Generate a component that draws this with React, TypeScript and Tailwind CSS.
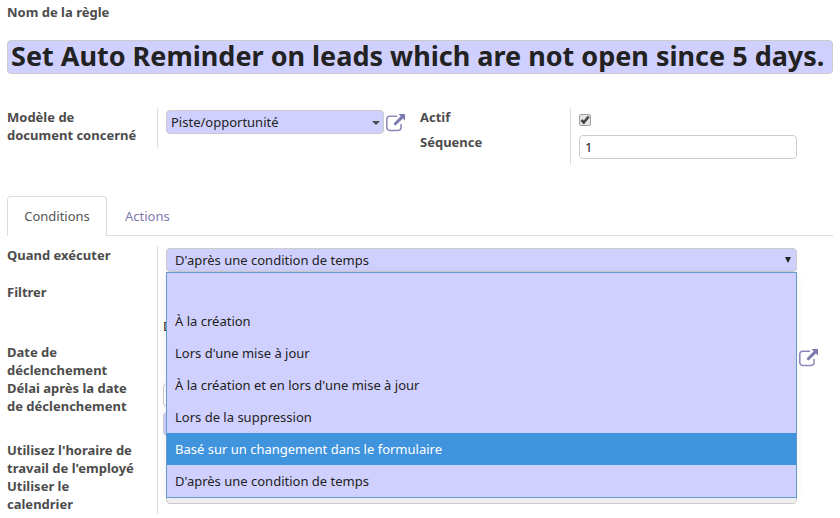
import { useState, type ReactNode } from "react";

const OPTIONS = [
  "",
  "À la création",
  "Lors d'une mise à jour",
  "À la création et en lors d'une mise à jour",
  "Lors de la suppression",
  "Basé sur un changement dans le formulaire",
  "D'après une condition de temps",
];

function ExternalLinkIcon() {
  return (
    <svg viewBox="0 0 20 18" className="h-[18px] w-5" fill="none" aria-hidden="true">
      <path
        d="M11 2.3H3.6A2.8 2.8 0 0 0 .8 5.1v8.5a2.8 2.8 0 0 0 2.8 2.8h8.6a2.8 2.8 0 0 0 2.8-2.8V10"
        stroke="#8a89b8"
        strokeWidth="1.5"
      />
      <path d="M12.4 0H19v6.6l-2.1-2.1-6.8 6.6a1 1 0 0 1-1.4 0l-.6-.6a1 1 0 0 1 0-1.4l6.6-6.8z" fill="#7c7bad" />
    </svg>
  );
}

function OpenRecord({ label }: { label: string }) {
  return (
    <button type="button" aria-label={label} className="block shrink-0">
      <ExternalLinkIcon />
    </button>
  );
}

type RowProps = { id: string; label: string; height: string; children?: ReactNode };

function Row({ id, label, height, children }: RowProps) {
  return (
    <div className={`flex ${height}`}>
      <label
        htmlFor={id}
        className="w-[151px] shrink-0 border-r border-[#ddd] pr-5 font-bold text-[#4c4c4c]"
      >
        {label}
      </label>
      <div className="min-w-0 flex-1">{children}</div>
    </div>
  );
}

export default function App() {
  const [when, setWhen] = useState("D'après une condition de temps");

  return (
    <main className="bg-white px-[7px] pt-[3px] font-['Noto_Sans','Open_Sans',sans-serif] text-[13px] leading-[18px] text-[#222]">
      <label htmlFor="name" className="block font-bold text-[#4c4c4c]">
        Nom de la règle
      </label>
      <input
        id="name"
        defaultValue="Set Auto Reminder on leads which are not open since 5 days."
        className="mt-[19px] block h-[34px] w-full rounded-[4px] border border-[#ccc] bg-[#d0d0ff] px-[3px] pb-[3px] text-[27px] leading-7 font-bold text-[#222]"
      />

      <section className="mt-[34px] grid grid-cols-2 items-start">
        <div className="flex">
          <label
            htmlFor="model"
            className="w-[151px] shrink-0 border-r border-[#ddd] pr-5 pb-1 font-bold text-[#4c4c4c]"
          >
            Modèle de document concerné
          </label>
          <div className="flex min-w-0 flex-1 items-start pt-[2px] pr-[14px] pl-2">
            <div className="relative min-w-0 flex-1">
              <select
                id="model"
                className="block h-6 w-full appearance-none rounded-[4px] border border-[#ccc] bg-[#d0d0ff] pl-1"
              >
                <option>Piste/opportunité</option>
              </select>
              <span className="pointer-events-none absolute top-[11px] right-1 border-x-4 border-t-4 border-x-transparent border-t-[#4c4c4c]" />
            </div>
            <div className="pt-1 pl-[2px]">
              <OpenRecord label="Ouvrir le modèle" />
            </div>
          </div>
        </div>

        <div>
          <div className="flex h-[25px]">
            <label
              htmlFor="active"
              className="w-[151px] shrink-0 border-r border-[#ddd] font-bold text-[#4c4c4c]"
            >
              Actif
            </label>
            <div className="relative mt-[6px] ml-2 h-3 w-3">
              <input
                id="active"
                type="checkbox"
                defaultChecked
                className="peer block h-3 w-3 appearance-none rounded-[2px] border border-[#a0a0a0] bg-[#e6e6e6]"
              />
              <svg
                viewBox="0 0 12 12"
                className="pointer-events-none absolute inset-0 hidden peer-checked:block"
                fill="none"
                stroke="#444"
                strokeWidth="2.6"
                aria-hidden="true"
              >
                <path d="M2.5 6l2.3 2.5L9.7 2.5" />
              </svg>
            </div>
          </div>
          <div className="flex h-8">
            <label
              htmlFor="sequence"
              className="w-[151px] shrink-0 border-r border-[#ddd] font-bold text-[#4c4c4c]"
            >
              Séquence
            </label>
            <div className="min-w-0 flex-1 pt-[2px] pr-9 pl-2">
              <input
                id="sequence"
                defaultValue="1"
                className="block h-6 w-full rounded-[4px] border border-[#ccc] bg-white px-[5px]"
              />
            </div>
          </div>
        </div>
      </section>

      <div role="tablist" className="mt-[31px] flex h-10 border-b border-[#ddd]">
        <button
          type="button"
          role="tab"
          aria-selected="true"
          className="-mb-px h-10 w-[100px] rounded-t-[4px] border border-b-0 border-[#ddd] bg-white pb-[2px] text-[#555]"
        >
          Conditions
        </button>
        <button
          type="button"
          role="tab"
          aria-selected="false"
          className="h-10 px-[18px] text-[#7c7bad]"
        >
          Actions
        </button>
      </div>

      <section className="pt-[10px]">
        <Row id="when" label="Quand exécuter" height="h-[37px]">
          <div className="relative mt-[2px] mr-9 ml-2">
            <button
              id="when"
              type="button"
              aria-haspopup="listbox"
              aria-expanded="true"
              className="flex h-6 w-full items-center justify-between rounded-[4px] border border-[#ccc] bg-[#d0d0ff] pr-[5px] pl-2 text-left"
            >
              {when}
              <svg viewBox="0 0 6 6" className="h-[6px] w-[6px]" fill="#222" aria-hidden="true">
                <path d="M0 0h6L3 6z" />
              </svg>
            </button>
            <ul
              role="listbox"
              aria-label="Quand exécuter"
              className="absolute inset-x-0 top-6 z-10 border border-[#6699cc] bg-[#d0d0ff] shadow-[0_0_8px_rgba(0,0,0,0.06)]"
            >
              {OPTIONS.map((option) => (
                <li
                  key={option}
                  role="option"
                  aria-selected={option === when}
                  onClick={() => setWhen(option)}
                  className={`h-8 px-2 leading-8 ${
                    option.startsWith("Basé") ? "bg-[#4094de] text-white" : ""
                  }`}
                >
                  {option}
                </li>
              ))}
            </ul>
          </div>
        </Row>
        <Row id="filter" label="Filtrer" height="h-[60px]">
          <p id="filter" className="pt-[34px] pl-[5px]">
            D
          </p>
        </Row>
        <Row id="trigger" label="Date de déclenchement" height="h-9">
          <div className="flex pl-2">
            <input
              id="trigger"
              className="h-6 min-w-0 flex-1 rounded-[4px] border border-[#ccc] bg-[#d0d0ff]"
            />
            <div className="w-9 pt-[6px] pl-[2px]">
              <OpenRecord label="Ouvrir la date" />
            </div>
          </div>
        </Row>
        <Row id="delay" label="Délai après la date de déclenchement" height="h-[62px]">
          <div className="flex flex-col gap-[5px] pt-1 pr-9 pl-[5px]">
            <input id="delay" className="h-6 w-40 rounded-[4px] border border-[#ccc] bg-white" />
            <select
              aria-label="Unité du délai"
              className="h-6 w-40 appearance-none rounded-[4px] border border-[#ccc] bg-[#d0d0ff]"
            />
          </div>
        </Row>
        <Row id="hours" label="Utilisez l'horaire de travail de l'employé" height="h-9">
          <input id="hours" type="checkbox" className="mt-[6px] ml-2 block h-3 w-3" />
        </Row>
        <Row id="calendar" label="Utiliser le calendrier" height="h-[37px]">
          <div className="pt-[3px] pr-9 pl-2">
            <input
              id="calendar"
              className="block h-6 w-full rounded-[4px] border border-[#ccc] bg-[#f2f2f2]"
            />
          </div>
        </Row>
      </section>
    </main>
  );
}
